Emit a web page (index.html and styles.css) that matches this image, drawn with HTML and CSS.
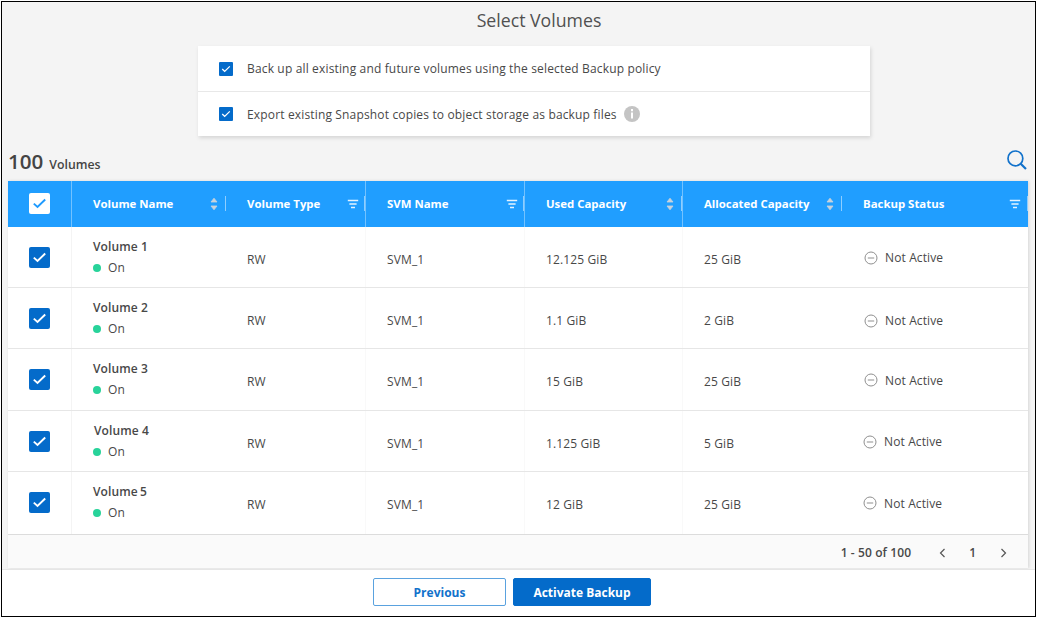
FILE: index.html
```
<!DOCTYPE html>
<html lang="en">
<head>
<meta charset="utf-8">
<title>Select Volumes</title>
<link rel="stylesheet" href="styles.css">
</head>
<body>
<svg width="0" height="0" class="defs">
  <symbol id="tick" viewBox="0 0 21 21"><path d="M4.8 10.6 8.5 14 16.2 6.5" fill="none" stroke="currentColor" stroke-width="1.9"/></symbol>
  <symbol id="sort" viewBox="0 0 8 14"><path d="M1 5 4 1.2 7 5ZM1 9 4 12.8 7 9Z" fill="#c9d3dc" stroke="#c9d3dc" stroke-width=".8" stroke-linejoin="round"/></symbol>
  <symbol id="filter" viewBox="0 0 12 10"><path d="M.8 1.5H11.2M2.4 5H9.6M4 8.5H8" stroke="#e4f3ff" stroke-width="1.7"/></symbol>
  <symbol id="inactive" viewBox="0 0 14 14"><circle cx="7" cy="7" r="6" fill="none" stroke="#8f8f8f"/><path d="M3.8 7H10.2" stroke="#8f8f8f"/></symbol>
</svg>
<div class="frame">
  <main class="content">
    <h1 class="title">Select Volumes</h1>
    <section class="options">
      <label class="option"><span class="check small"><svg><use href="#tick"/></svg></span><span class="opt-text first">Back up all existing and future volumes using the selected Backup policy</span></label>
      <label class="option"><span class="check small"><svg><use href="#tick"/></svg></span><span class="opt-text">Export existing Snapshot copies to object storage as backup files</span>
        <svg class="info" viewBox="0 0 16 16"><circle cx="8" cy="8" r="8" fill="#c4c4c4"/><path d="M8 3.1V5.2M8 6.5V12.6" stroke="#fff" stroke-width="2"/></svg></label>
    </section>
    <div class="summary">
      <div class="count"><span class="number">100</span><span class="unit">Volumes</span></div>
      <svg class="search" viewBox="0 0 20 20"><circle cx="8.4" cy="8.4" r="7.4" fill="none" stroke="#1272cb" stroke-width="1.7"/><path d="M13.7 13.7 19 19" stroke="#1272cb" stroke-width="2.2"/></svg>
    </div>
    <div class="table">
      <div class="row head">
        <div class="cell pick"><span class="check inverse"><svg><use href="#tick"/></svg></span></div>
        <div class="cell"><span>Volume Name</span><svg class="sort"><use href="#sort"/></svg></div>
        <div class="cell ruled"><span>Volume Type</span><svg class="filter"><use href="#filter"/></svg></div>
        <div class="cell ruled"><span>SVM Name</span><svg class="filter"><use href="#filter"/></svg></div>
        <div class="cell ruled"><span>Used Capacity</span><svg class="sort"><use href="#sort"/></svg></div>
        <div class="cell"><span>Allocated Capacity</span><svg class="sort"><use href="#sort"/></svg></div>
        <div class="cell"><span>Backup Status</span><svg class="filter"><use href="#filter"/></svg></div>
      </div>
      <div class="row">
        <div class="cell pick"><span class="check"><svg><use href="#tick"/></svg></span></div>
        <div class="cell volume"><b>Volume 1</b><span class="state">On</span></div>
        <div class="cell ruled">RW</div><div class="cell ruled">SVM_1</div><div class="cell ruled">12.125 GiB</div><div class="cell">25 GiB</div>
        <div class="cell status"><svg><use href="#inactive"/></svg><span>Not Active</span></div>
      </div>
      <div class="row">
        <div class="cell pick"><span class="check"><svg><use href="#tick"/></svg></span></div>
        <div class="cell volume"><b>Volume 2</b><span class="state">On</span></div>
        <div class="cell ruled">RW</div><div class="cell ruled">SVM_1</div><div class="cell ruled">1.1 GiB</div><div class="cell">2 GiB</div>
        <div class="cell status low"><svg><use href="#inactive"/></svg><span>Not Active</span></div>
      </div>
      <div class="row tall">
        <div class="cell pick"><span class="check"><svg><use href="#tick"/></svg></span></div>
        <div class="cell volume"><b>Volume 3</b><span class="state">On</span></div>
        <div class="cell ruled">RW</div><div class="cell ruled">SVM_1</div><div class="cell ruled">15 GiB</div><div class="cell">25 GiB</div>
        <div class="cell status mid"><svg><use href="#inactive"/></svg><span>Not Active</span></div>
      </div>
      <div class="row">
        <div class="cell pick"><span class="check"><svg><use href="#tick"/></svg></span></div>
        <div class="cell volume shifted"><b>Volume 4</b><span class="state">On</span></div>
        <div class="cell ruled">RW</div><div class="cell ruled">SVM_1</div><div class="cell ruled">1.125 GiB</div><div class="cell">5 GiB</div>
        <div class="cell status near"><svg><use href="#inactive"/></svg><span>Not Active</span></div>
      </div>
      <div class="row last">
        <div class="cell pick"><span class="check"><svg><use href="#tick"/></svg></span></div>
        <div class="cell volume tight"><b>Volume 5</b><span class="state">On</span></div>
        <div class="cell ruled">RW</div><div class="cell ruled">SVM_1</div><div class="cell ruled">12 GiB</div><div class="cell">25 GiB</div>
        <div class="cell status near mid"><svg><use href="#inactive"/></svg><span>Not Active</span></div>
      </div>
      <div class="pager">
        <span class="range">1 - 50 of 100</span>
        <svg class="arrow" viewBox="0 0 7 10"><path d="M5.5 1 1.5 5 5.5 9" fill="none" stroke="#555" stroke-width="1.2"/></svg>
        <span class="page">1</span>
        <svg class="arrow" viewBox="0 0 7 10"><path d="M1.5 1 5.5 5 1.5 9" fill="none" stroke="#555" stroke-width="1.2"/></svg>
      </div>
    </div>
  </main>
  <footer class="actions">
    <button class="btn">Previous</button>
    <button class="btn primary">Activate Backup</button>
  </footer>
</div>
</body>
</html>
```
FILE: styles.css
```
* { box-sizing: border-box; }
body { margin: 0; background: #fff; font-family: "Open Sans", "Noto Sans", sans-serif; font-size: 12px; color: #484848; }
svg { display: block; flex: none; }
.defs { position: absolute; }
.frame { width: 1035px; height: 616px; margin: 1px; border: 1px solid #000; display: flex; flex-direction: column; }
.content { height: 568px; background: #f4f4f4; border-bottom: 1px solid #e6e6e6; padding: 0 7px 0 6px; overflow: hidden; }
.title { margin: 0; padding: 6px 0 0 42px; height: 44px; font-size: 17.7px; line-height: 25px; font-weight: 400; text-align: center; color: #505050; }
.options { width: 672px; height: 90px; margin-left: 190px; background: #fff; box-shadow: 1px 2px 4px rgba(0,0,0,.13); }
.option { display: flex; align-items: center; height: 45px; padding-left: 21px; }
.option + .option { border-top: 1px solid #e8e8e8; }
.opt-text { margin-left: 14px; white-space: nowrap; letter-spacing: .155px; }
.info { width: 16px; height: 16px; margin-left: 7px; }
.check { display: block; width: 21px; height: 21px; border-radius: 2px; background: #046bca; color: #fff; }
.check svg { width: 100%; height: 100%; }
.check.small { width: 14px; height: 14px; border-radius: 1px; }
.check.inverse { background: #fff; color: #1e9bff; }
.summary { display: flex; justify-content: space-between; height: 45px; padding: 11px 1px 0 0; }
.count { display: flex; align-items: baseline; height: 30px; gap: 6px; color: #444; }
.number { font-size: 20.6px; line-height: 28px; font-weight: 600; }
.unit { font-size: 12.3px; font-weight: 600; }
.search { width: 20px; height: 20px; margin-top: 3px; }
.table { width: 1020px; background: #fff; box-shadow: 1px 0 3px rgba(0,0,0,.12); }
.row { display: grid; grid-template-columns: 64px 154px 140px 159px 158px 159px 186px; height: 61px; border-bottom: 1px solid #e6e6e6; }
.row.tall { height: 62px; }
.row.last { height: 63px; border-bottom-color: #dcdcdc; }
.cell { padding: 24px 0 0 21px; line-height: 17px; white-space: nowrap; letter-spacing: .12px; }
.pick { padding: 20px 0 0 21px; border-right: 1px solid #f4f4f4; }
.ruled { border-right: 1px solid #f9f9f9; }
.volume { padding-top: 11px; }
.volume b { display: block; font-weight: 600; }
.shifted b { margin-left: 1px; }
.tight b { word-spacing: -1px; }
.state { display: flex; align-items: center; gap: 7px; margin-top: 4px; }
.state::before { content: ""; width: 8px; height: 8px; border-radius: 50%; background: #28d39a; }
.status { display: flex; align-items: flex-start; gap: 7px; padding: 22px 0 0 22px; }
.status svg { width: 14px; height: 14px; margin-top: 2px; }
.status.low { padding-top: 24px; }
.status.mid { padding-top: 23px; }
.status.mid svg { margin-top: 1px; }
.status.near { padding-left: 21px; }
.head { height: 46px; background: #209eff; border: 0; color: #fff; font-weight: 700; font-size: 11.4px; }
.head .cell { display: flex; align-items: center; justify-content: space-between; padding: 0 0 0 21px; border-color: #73c2ff; letter-spacing: 0; }
.head .cell > span:not(.check) { margin-top: -2px; }
.head .cell .check { margin-top: -1px; }
.head .cell:not(.pick)::after { content: ""; width: 1px; height: 15px; margin-top: -1px; background: #8fceff; }
.head .cell:not(.pick) svg { margin: -1px 7px 0 auto; }
.head .filter { width: 12px; height: 10px; }
.head .cell:not(.pick) .filter { margin-right: 6px; }
.head .cell.ruled .filter { margin-right: 5px; }
.sort { width: 8px; height: 14px; }
.pager { display: flex; align-items: center; height: 33px; padding: 2px 21px 0 0; justify-content: flex-end; background: #fafafa; font-weight: 600; }
.range { margin-right: 28px; letter-spacing: .1px; }
.page { margin: 0 24px 0 23px; }
.arrow { width: 7px; height: 10px; }
.actions { display: flex; gap: 7px; padding: 8px 0 0 371px; }
.btn { width: 133px; height: 28px; padding: 0; border: 1px solid #5aa2df; border-radius: 2px; background: #fff; color: #1272cb; font: 700 12px "Open Sans", sans-serif; }
.btn.primary { width: 138px; border-color: #046bca; background: #046bca; color: #fff; }
```
